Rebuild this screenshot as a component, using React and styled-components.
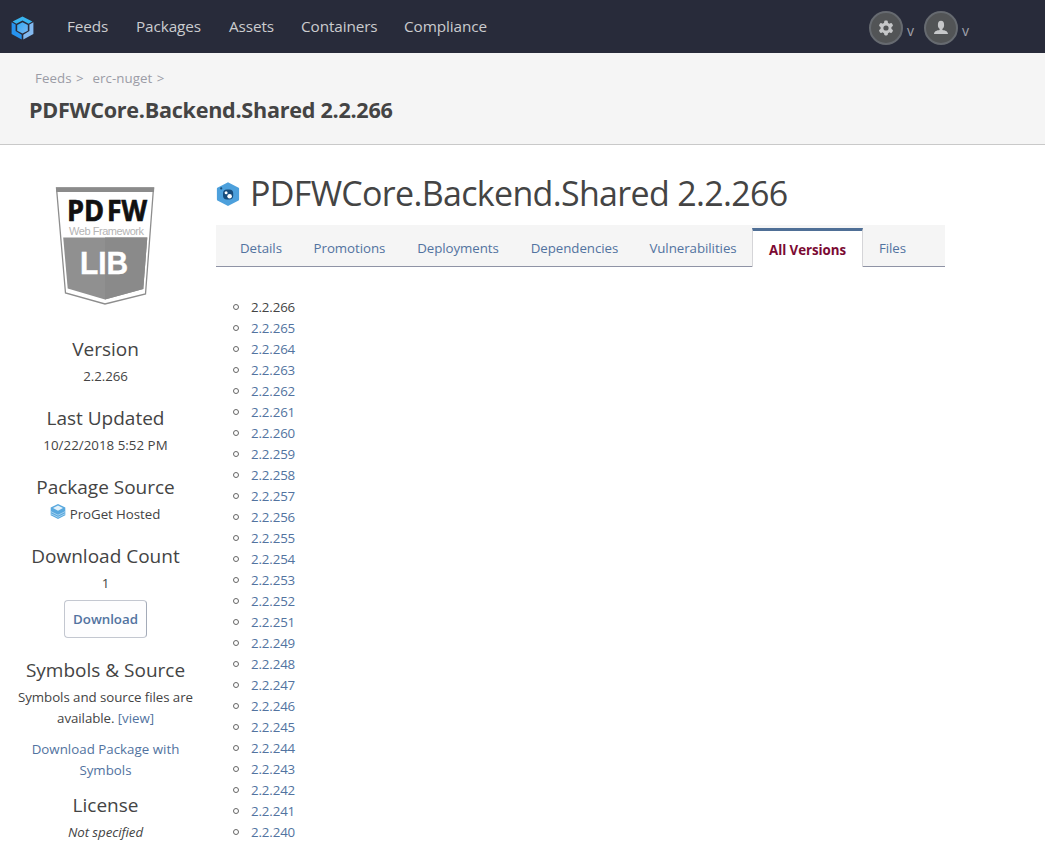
import React from "react";
import styled, { createGlobalStyle } from "styled-components";

const GlobalStyle = createGlobalStyle`
  *, *::before { box-sizing: border-box; }
  html, body { margin: 0; padding: 0; overflow: hidden; }
  body {
    background: #fff;
    color: #444;
    font-family: "Open Sans", "Noto Sans", sans-serif;
    font-size: 13.3px;
    line-height: 21px;
    letter-spacing: -0.13px;
  }
  a { color: #5273a0; text-decoration: none; }
`;

const Page = styled.div`
  height: 845px;
  overflow: hidden;
`;

const TopBar = styled.header`
  display: flex;
  align-items: center;
  height: 53px;
  padding: 3px 74px 0 11px;
  background: #282b3a;
`;

const Nav = styled.nav`
  display: flex;
  gap: 28px;
  margin: -5px auto 0 33px;
`;

const NavLink = styled.a`
  width: ${(p) => p.$width}px;
  font-size: 15.3px;
  line-height: 24px;
  letter-spacing: -0.1px;
  white-space: nowrap;
  && { color: #cbcccf; }
`;

const Tools = styled.div`
  display: flex;
  gap: 8px;
`;

const Tool = styled.div`
  display: flex;
  align-items: center;
  gap: 4px;
  width: 47px;
`;

const Round = styled.span`
  display: flex;
  align-items: center;
  justify-content: center;
  flex: none;
  width: 34px;
  height: 34px;
  border: 2px solid #666a70;
  border-radius: 50%;
  background: #525456;
`;

const Caret = styled.span`
  padding-top: 6px;
  color: #a0a2aa;
  font-size: 14px;
  line-height: 14px;
`;

const PageHead = styled.section`
  height: 92px;
  padding: 15px 30px 0 29px;
  background: #f5f5f5;
  border-bottom: 1px solid #c9c9c9;
`;

const Crumbs = styled.div`
  display: flex;
  gap: 9px;
  padding-left: 6px;
  color: #9b9ca6;
  letter-spacing: 0.06px;
  word-spacing: 0.8px;
`;

const PageTitle = styled.h1`
  margin: 6px 0 0;
  font-size: 21.6px;
  line-height: 30px;
  font-weight: 700;
  letter-spacing: -0.27px;
  white-space: nowrap;
`;

const Body = styled.div`
  display: flex;
`;

const Sidebar = styled.aside`
  width: 179px;
  margin: 42px 21px 0 16px;
  text-align: center;
  letter-spacing: -0.06px;
`;

const Badge = styled.svg`
  display: block;
  width: 100px;
  height: 119px;
  margin: 0 40px 30px 39px;
`;

const Section = styled.section`
  margin-bottom: ${(p) => (p.$gap === undefined ? 18 : p.$gap)}px;
`;

const SectionTitle = styled.h2`
  margin: 0 0 4px;
  font-size: 19px;
  line-height: 26px;
  font-weight: 400;
  letter-spacing: 0;
  white-space: nowrap;
`;

const DateText = styled.time`
  letter-spacing: 0.03px;
`;

const Source = styled.div`
  display: flex;
  justify-content: center;
  gap: 4px;
  padding-right: 1px;
`;

const DownloadButton = styled.button`
  display: block;
  width: 83px;
  height: 38px;
  margin: 0 48px 19px 48px;
  padding: 0;
  border: 1px solid #c3c7d0;
  border-right-color: #a3aab8;
  border-radius: 4px;
  background: #fdfdfe;
  color: #5273a0;
  font: 600 13.3px/34px "Open Sans", sans-serif;
  letter-spacing: 0;
`;

const LinkBlock = styled.a`
  display: block;
  margin-top: 10px;
  letter-spacing: 0.02px;
`;

const Main = styled.main`
  width: 729px;
  padding-top: 28px;
`;

const Heading = styled.div`
  display: flex;
  align-items: center;
  height: 42px;
  gap: 10px;
`;

const HeadingText = styled.h2`
  margin: 0;
  padding-bottom: 2px;
  font-size: 34px;
  line-height: 42px;
  font-weight: 400;
  letter-spacing: -0.68px;
  white-space: nowrap;
`;

const Tabs = styled.nav`
  display: flex;
  height: 42px;
  margin: 10px 0 29.5px;
  padding-left: 8px;
  background: #f5f5f5;
  box-shadow: inset 0 -1px #8f93a5;
`;

const Tab = styled.a`
  width: ${(p) => p.$width}px;
  line-height: 46px;
  text-align: center;
  white-space: nowrap;
  letter-spacing: -0.05px;
`;

const ActiveTab = styled(Tab)`
  height: 39px;
  margin-top: 3px;
  background: #fff;
  border: 1px solid #d5d5d8;
  border-top: 3px solid #4f6f96;
  border-bottom: 0;
  line-height: 39px;
  font-weight: 700;
  && { color: #7b0a33; }
`;

const Versions = styled.ul`
  margin: 0;
  padding-left: 35px;
  list-style: none;
`;

const VersionItem = styled.li`
  display: flex;
  align-items: center;
  height: 21px;
  margin-left: -18px;

  &::before {
    content: "";
    width: 6px;
    height: 6px;
    margin: -1px 12px 0 0;
    border: 1px solid #666;
    border-radius: 50%;
  }
`;

const Logo = () => (
  <svg width="23" height="24" viewBox="0 0 23 24">
    <defs>
      <linearGradient id="logo" x1="0" y1="0" x2="1" y2="1">
        <stop offset="0" stopColor="#31a9f3" />
        <stop offset="1" stopColor="#79b8f2" />
      </linearGradient>
    </defs>
    <path d="M11.5 0.5 21.4 5.6 17.6 7.8 11.5 4.6 5.4 7.8 1.6 5.6Z" fill="#39b4ef" />
    <path d="M0.6 6.3 4.6 8.6V15L10.7 18.8V23.6L0.6 18Z" fill="#2793ee" />
    <path d="M22.4 6.3 18.4 8.6V15L12.3 18.8V23.6L22.4 18Z" fill="#83b9ef" />
    <path d="M11.5 6.2 16.8 9.1V14.7L11.5 17.6 6.2 14.7V9.1Z" fill="url(#logo)" />
  </svg>
);

const Gear = () => (
  <svg width="16" height="16" viewBox="0 0 16 16">
    <g fill="#c6c7c9">
      {[0, 60, 120].map((a) => (
        <rect key={a} x="6.1" y="0.6" width="3.8" height="14.8" rx="1.3" transform={`rotate(${a} 8 8)`} />
      ))}
      <circle cx="8" cy="8" r="5.5" />
    </g>
    <circle cx="8" cy="8" r="2.6" fill="#525456" />
  </svg>
);

const Person = () => (
  <svg width="16" height="16" viewBox="0 0 16 16" fill="#c6c7c9">
    <ellipse cx="8" cy="4.9" rx="3.1" ry="4.1" />
    <path d="M6.6 8H9.4V10C12 10.4 14.8 11 15 14H1C1.2 11 4 10.4 6.6 10Z" />
  </svg>
);

const PackageIcon = () => (
  <svg width="24" height="24" viewBox="0 0 24 24">
    <path d="M12 1.2 22.2 6.6V17.6L12 23 1.8 17.6V6.6Z" fill="#4da0dc" stroke="#4da0dc" strokeWidth="1.8" strokeLinejoin="round" />
    <circle cx="5.2" cy="6.4" r="1.1" fill="#174b78" />
    <rect x="7" y="7.4" width="10.2" height="10.2" rx="4" fill="#164b7b" />
    <circle cx="10.1" cy="10.7" r="1.5" fill="#fff" />
    <circle cx="13.6" cy="14.2" r="2.3" fill="#fff" />
  </svg>
);

const HostedIcon = () => (
  <svg width="16" height="16" viewBox="0 0 16 16">
    <path d="M8 0 15.3 3.5V11.2L8 15 0.7 11.2V3.5Z" fill="#58a8de" />
    <path d="M8 1.6 13 4.1 8 6.7 3 4.1Z" fill="#e3f2fb" />
    <path d="M0.9 7.6 8 11.2 15.1 7.6M0.9 9.8 8 13.3 15.1 9.8" fill="none" stroke="#b9dcf3" strokeWidth="0.8" />
  </svg>
);

const PackageBadge = () => (
  <Badge viewBox="0 0 100 119">
    <path d="M1.5 1H98.5L90.5 107 50 117 10.5 106Z" fill="#fff" stroke="#8d8d8d" strokeWidth="1.3" />
    <path d="M1 0.5H99.3L99 5H1.4Z" fill="#8b8b8b" />
    <path d="M8.2 50.5H92.3L88.3 102 50 112.5 12.7 101.5Z" fill="#909090" />
    <path d="M50 50.5H92.3L88.3 102 50 112.5Z" fill="#8a8a8a" />
    <g fontFamily="Open Sans, sans-serif" fontSize="29" fontWeight="700" fill="#111" stroke="#111" strokeWidth="0.7">
      <text x="12" y="33.5" textLength="37" lengthAdjust="spacingAndGlyphs">PD</text>
      <text x="52" y="33.5" textLength="40" lengthAdjust="spacingAndGlyphs">FW</text>
    </g>
    <g fontFamily="Liberation Sans, sans-serif">
      <text x="14" y="47.5" fontSize="11" fill="#b4b4b4" textLength="75" lengthAdjust="spacing">Web Framework</text>
      <text x="25" y="86.5" fontSize="31" fontWeight="700" fill="#fff" stroke="#fff" strokeWidth="0.4" textLength="48" lengthAdjust="spacingAndGlyphs">LIB</text>
    </g>
  </Badge>
);

const navItems = [
  ["Feeds", 41],
  ["Packages", 65],
  ["Assets", 44],
  ["Containers", 75],
  ["Compliance", 84],
];

const tabs = [
  ["Details", 74],
  ["Promotions", 103],
  ["Deployments", 114],
  ["Dependencies", 119],
  ["Vulnerabilities", 118],
  ["All Versions", 111],
  ["Files", 59],
];

const versions = [];
for (let n = 266; n >= 240; n--) if (n !== 250) versions.push(`2.2.${n}`);

export default function App() {
  return (
    <Page>
      <GlobalStyle />
      <TopBar>
        <Logo />
        <Nav>
          {navItems.map(([label, width]) => (
            <NavLink key={label} $width={width}>{label}</NavLink>
          ))}
        </Nav>
        <Tools>
          <Tool><Round><Gear /></Round><Caret>v</Caret></Tool>
          <Tool><Round><Person /></Round><Caret>v</Caret></Tool>
        </Tools>
      </TopBar>
      <PageHead>
        <Crumbs><span>Feeds &gt;</span><span>erc-nuget &gt;</span></Crumbs>
        <PageTitle>PDFWCore.Backend.Shared 2.2.266</PageTitle>
      </PageHead>
      <Body>
        <Sidebar>
          <PackageBadge />
          <Section>
            <SectionTitle>Version</SectionTitle>
            2.2.266
          </Section>
          <Section>
            <SectionTitle>Last Updated</SectionTitle>
            <DateText>10/22/2018 5:52 PM</DateText>
          </Section>
          <Section>
            <SectionTitle>Package Source</SectionTitle>
            <Source><HostedIcon />ProGet Hosted</Source>
          </Section>
          <Section $gap={6}>
            <SectionTitle>Download Count</SectionTitle>
            1
          </Section>
          <DownloadButton>Download</DownloadButton>
          <Section $gap={11}>
            <SectionTitle>Symbols &amp; Source</SectionTitle>
            Symbols and source files are<br />available. <a>[view]</a>
            <LinkBlock>Download Package with<br />Symbols</LinkBlock>
          </Section>
          <Section>
            <SectionTitle>License</SectionTitle>
            <em>Not specified</em>
          </Section>
        </Sidebar>
        <Main>
          <Heading>
            <PackageIcon />
            <HeadingText>PDFWCore.Backend.Shared 2.2.266</HeadingText>
          </Heading>
          <Tabs>
            {tabs.map(([label, width]) => {
              const Item = label === "All Versions" ? ActiveTab : Tab;
              return <Item key={label} $width={width}>{label}</Item>;
            })}
          </Tabs>
          <Versions>
            {versions.map((v, i) => (
              <VersionItem key={v}>{i === 0 ? v : <a>{v}</a>}</VersionItem>
            ))}
          </Versions>
        </Main>
      </Body>
    </Page>
  );
}
